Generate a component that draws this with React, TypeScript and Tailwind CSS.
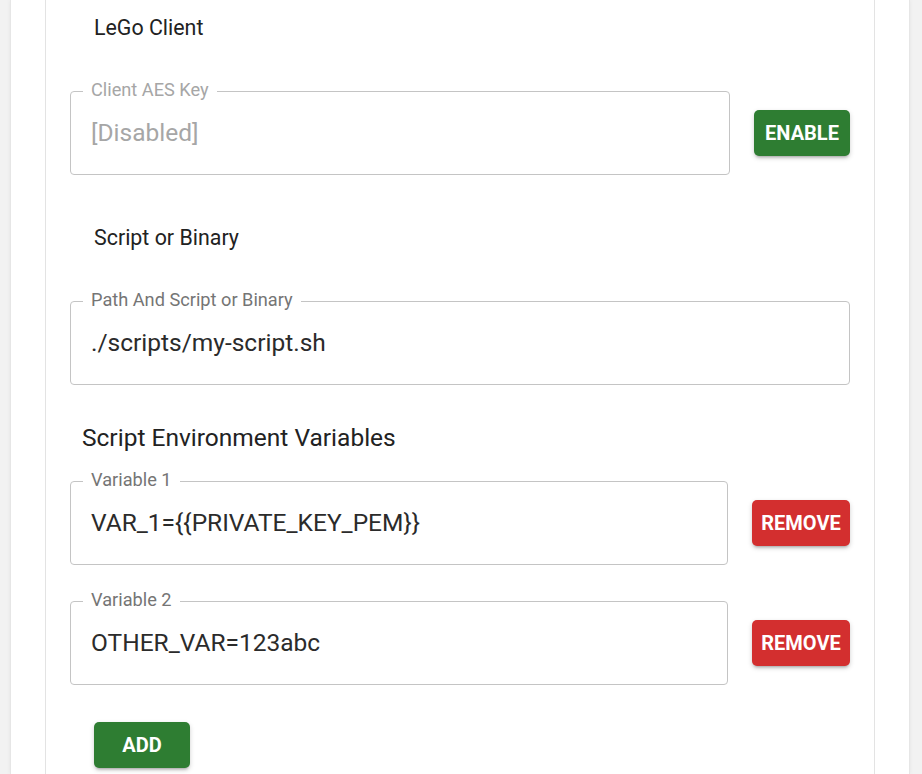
import React from "react";

type Variable = { label: string; value: string };

const variables: Variable[] = [
  { label: "Variable 1", value: "VAR_1={{PRIVATE_KEY_PEM}}" },
  { label: "Variable 2", value: "OTHER_VAR=123abc" }
];

function OutlinedField({
  label,
  value,
  disabled,
  className
}: {
  label: string;
  value: string;
  disabled?: boolean;
  className?: string;
}) {
  return (
    <div className={"relative flex h-[84px] items-center rounded-[4px] border border-[#c4c4c4] px-[20px] " + (className ?? "")}>
      {/* notched label sitting on the outline */}
      <span
        className={
          "absolute left-[12px] top-[-12px] bg-white px-[8px] text-[18.2px] leading-[20px] " +
          (disabled ? "text-[#a6a6a6]" : "text-[#757575]")
        }
      >
        {label}
      </span>
      <span className={"text-[24.5px] leading-[28px] " + (disabled ? "text-[#a6a6a6]" : "text-[#2b2b2b]")}>{value}</span>
    </div>
  );
}

function ActionButton({ label, color }: { label: string; color: "green" | "red" }) {
  return (
    <button
      type="button"
      className={
        "h-[46px] shrink-0 rounded-[5px] text-[20px] font-bold uppercase text-white shadow-[0_3px_3px_-2px_rgba(0,0,0,0.25),0_2px_5px_0_rgba(0,0,0,0.18)] " +
        (color === "green" ? "w-[96px] bg-[#2e7d32]" : "w-[98px] bg-[#d32f2f]")
      }
    >
      {label}
    </button>
  );
}

export default function App() {
  return (
    <div className="min-h-screen bg-[#f2f2f2] pl-[10px] pr-[12px] font-['Roboto',sans-serif]">
      <div className="min-h-screen border-x border-[#e6e6e6] bg-white pl-[34px] pr-[34px] shadow-[0_0_4px_rgba(0,0,0,0.06)]">
        <div className="min-h-screen border-x border-[#e3e3e3] bg-white px-[24px]">
          <h2 className="pl-[24px] pt-[12px] text-[21.4px] leading-[32px] text-[#222]">LeGo Client</h2>

          <div className="mt-[47px] flex items-center gap-[24px]">
            <OutlinedField label="Client AES Key" value="[Disabled]" disabled className="flex-1" />
            <ActionButton label="Enable" color="green" />
          </div>

          <h2 className="mt-[47px] pl-[24px] text-[21.4px] leading-[32px] text-[#222]">Script or Binary</h2>

          <OutlinedField label="Path And Script or Binary" value="./scripts/my-script.sh" className="mt-[47px] w-full" />

          <h2 className="mt-[37px] pl-[12px] text-[24.5px] leading-[32px] text-[#222]">Script Environment Variables</h2>

          <div className="mt-[27px] flex flex-col gap-[36px]">
            {variables.map((v) => (
              <div key={v.label} className="flex items-center gap-[24px]">
                <OutlinedField label={v.label} value={v.value} className="flex-1" />
                <ActionButton label="Remove" color="red" />
              </div>
            ))}
          </div>

          <div className="mt-[37px] pl-[24px]">
            <ActionButton label="Add" color="green" />
          </div>
        </div>
      </div>
    </div>
  );
}
